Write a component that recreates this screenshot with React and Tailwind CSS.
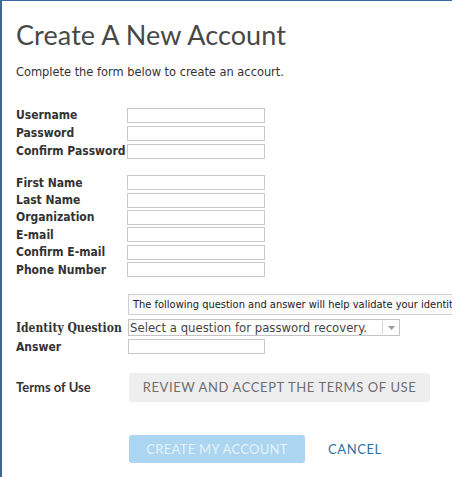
import React from 'react';

const Field = ({ label, h = 'h-[18px]' }) => (
  <div className={`flex items-center ${h}`}>
    <label className="w-[111px] shrink-0 text-[12px] font-bold text-[#333]">{label}</label>
    <input className="w-[138px] h-[15px] border border-[#c9c9c9] bg-white outline-none" />
  </div>
);

export default function App() {
  return (
    <div className="w-[452px] h-[477px] overflow-hidden bg-white border-l-2 border-t border-[#3b679e] pl-[14px] font-['DejaVu_Sans_Condensed',sans-serif]">
      <h1 className="mt-[18px] text-[27px] leading-[32px] text-[#484848] font-['Lato',sans-serif] tracking-[0.1px]">
        Create A New Account
      </h1>
      <p className="mt-[14px] text-[12.7px] leading-[14px] text-[#333]">
        Complete the form below to create an accourt.
      </p>

      <div className="mt-[27px]">
        <Field label="Username" />
        <Field label="Password" />
        <Field label="Confirm Password" />
      </div>

      <div className="mt-[14px]">
        <Field label="First Name" h="h-[17.4px]" />
        <Field label="Last Name" h="h-[17.4px]" />
        <Field label="Organization" h="h-[17.4px]" />
        <Field label="E-mail" h="h-[17.4px]" />
        <Field label="Confirm E-mail" h="h-[17.4px]" />
        <Field label="Phone Number" h="h-[17.4px]" />
      </div>

      <div className="mt-[16px] ml-[112px] w-[400px] h-[21px] border border-[#cfcfcf] bg-[#fafafa] flex items-center pl-[4px] text-[11px] text-[#222] whitespace-nowrap">
        The following question and answer will help validate your identity.
      </div>

      <div className="mt-[4px] flex items-center h-[17px]">
        <label className="w-[112px] shrink-0 text-[12px] font-bold text-[#333] font-['DejaVu_Serif_Condensed',serif]">Identity Question</label>
        <div className="w-[272px] h-[17px] border border-[#c4c4c4] bg-white flex items-center">
          <span className="flex-1 pl-[1px] text-[13px] text-[#444] whitespace-nowrap">Select a question for password recovery.</span>
          <span className="w-[17px] h-[13px] border-l border-[#d6d6d6] flex items-center justify-center">
            <svg width="7" height="4" viewBox="0 0 7 4"><path d="M0 0h7L3.5 4z" fill="#9a9a9a" /></svg>
          </span>
        </div>
      </div>

      <div className="mt-[3px] flex items-center h-[15px]">
        <label className="w-[112px] shrink-0 text-[12px] font-bold text-[#333]">Answer</label>
        <input className="w-[137px] h-[15px] border border-[#c9c9c9] bg-white outline-none" />
      </div>

      <div className="mt-[19px] flex items-center">
        <label className="w-[113px] shrink-0 text-[13px] font-bold text-[#333] font-['Lato',sans-serif]">Terms of Use</label>
        <button className="w-[301px] h-[29px] rounded-[3px] bg-[#eeeeee] text-[13px] tracking-[0.6px] text-[#6e6e6e] font-['Lato',sans-serif]">
          REVIEW AND ACCEPT THE TERMS OF USE
        </button>
      </div>

      <div className="mt-[33px] flex items-center pl-[113px]">
        <button className="w-[176px] h-[28px] rounded-[3px] bg-[#acd5f1] text-[13px] tracking-[0.3px] text-[#e4f2fb] font-['Lato',sans-serif]">
          CREATE MY ACCOUNT
        </button>
        <span className="ml-[23px] text-[13px] tracking-[0.6px] text-[#2f6fa6] font-['Lato',sans-serif]">CANCEL</span>
      </div>
    </div>
  );
}
